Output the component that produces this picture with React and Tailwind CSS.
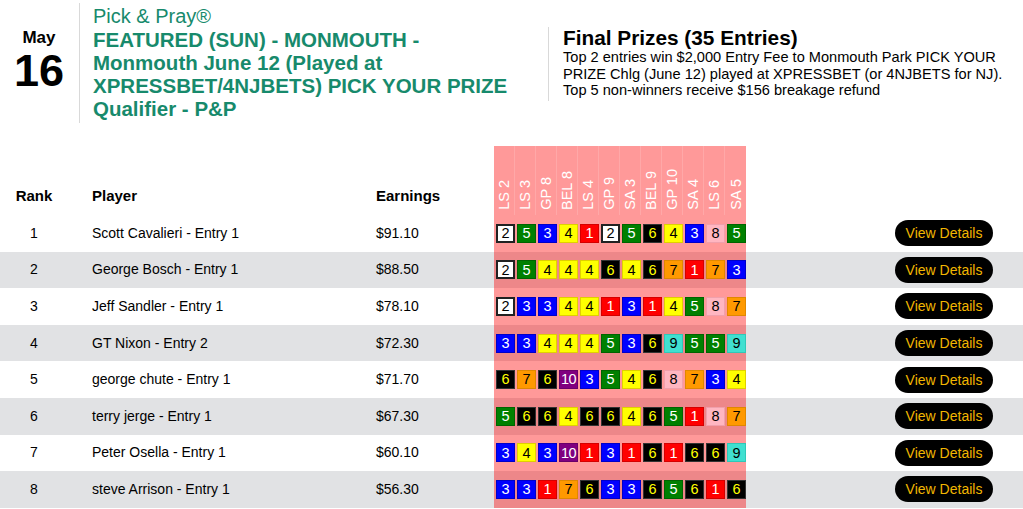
import React from "react";

const COLS = ["LS 2", "LS 3", "GP 8", "BEL 8", "LS 4", "GP 9", "SA 3", "BEL 9", "GP 10", "SA 4", "LS 6", "SA 5"];

const ROWS = [
  { rank: 1, name: "Scott Cavalieri - Entry 1", earn: "$91.10", picks: [2, 5, 3, 4, 1, 2, 5, 6, 4, 3, 8, 5] },
  { rank: 2, name: "George Bosch - Entry 1", earn: "$88.50", picks: [2, 5, 4, 4, 4, 6, 4, 6, 7, 1, 7, 3] },
  { rank: 3, name: "Jeff Sandler - Entry 1", earn: "$78.10", picks: [2, 3, 3, 4, 4, 1, 3, 1, 4, 5, 8, 7] },
  { rank: 4, name: "GT Nixon - Entry 2", earn: "$72.30", picks: [3, 3, 4, 4, 4, 5, 3, 6, 9, 5, 5, 9] },
  { rank: 5, name: "george chute - Entry 1", earn: "$71.70", picks: [6, 7, 6, 10, 3, 5, 4, 6, 8, 7, 3, 4] },
  { rank: 6, name: "terry jerge - Entry 1", earn: "$67.30", picks: [5, 6, 6, 4, 6, 6, 4, 6, 5, 1, 8, 7] },
  { rank: 7, name: "Peter Osella - Entry 1", earn: "$60.10", picks: [3, 4, 3, 10, 1, 3, 1, 6, 1, 6, 6, 9] },
  { rank: 8, name: "steve Arrison - Entry 1", earn: "$56.30", picks: [3, 3, 1, 7, 6, 3, 3, 6, 5, 6, 1, 6] },
];

const CLOTH = {
  1: "bg-[#ff0000] text-white border-[#d40000]",
  2: "bg-white text-black border-[#222] border-2",
  3: "bg-[#0000ff] text-white border-[#0000c8]",
  4: "bg-[#ffff00] text-black border-[#e0d000]",
  5: "bg-[#008000] text-white border-[#006400]",
  6: "bg-black text-[#ffff00] border-[#333]",
  7: "bg-[#ff9900] text-black border-[#e08800]",
  8: "bg-[#ffb6c1] text-black border-[#f0a0ac]",
  9: "bg-[#40e0d0] text-black border-[#30c8b8]",
  10: "bg-[#800080] text-white border-[#6a006a]",
};

function Cloth({ n }) {
  return (
    <div
      className={`w-[19px] h-[19px] flex items-center justify-center border text-[14.5px] leading-none ${CLOTH[n]} ${n === 10 ? "tracking-[-0.5px]" : ""}`}
    >
      {n}
    </div>
  );
}

export default function App() {
  return (
    <div className="w-[1023px] h-[509px] overflow-hidden bg-white text-black font-['Liberation_Sans',Arial,sans-serif]">
      {/* Header */}
      <div className="flex items-center h-[124px]">
        <div className="flex items-stretch pt-[1px] h-[121px]">
          <div className="w-[80px] border-r border-[#d9d9d9] flex flex-col items-center pt-[25px] pr-[1px]">
            <div className="text-[17px] font-bold leading-[20px]">May</div>
            <div className="text-[45px] font-bold leading-[46px]">16</div>
          </div>
          <div className="w-[436px] pl-[13px] text-[#178a6c] text-[20px] leading-[23px] pt-[2px]">
            <div>Pick &amp; Pray®</div>
            <div className="font-bold text-[20.5px]">
              FEATURED (SUN) - MONMOUTH - Monmouth June 12 (Played at XPRESSBET/4NJBETS) PICK YOUR PRIZE Qualifier - P&amp;P
            </div>
          </div>
        </div>
        <div className="ml-[32px] border-l border-[#d9d9d9] pl-[14px] w-[472px] self-start mt-[27px] pb-[2px]">
          <div className="text-[20.8px] font-bold leading-[22px]">Final Prizes (35 Entries)</div>
          <div className="text-[14.6px] leading-[16.5px]">
            Top 2 entries win $2,000 Entry Fee to Monmouth Park PICK YOUR PRIZE Chlg (June 12) played at XPRESSBET (or 4NJBETS for NJ). Top 5 non-winners receive $156 breakage refund
          </div>
        </div>
      </div>

      {/* Table */}
      <div className="mt-[22px]">
        <div className="flex h-[69px] text-[15px] font-bold">
          <div className="w-[68px] flex items-end justify-center pb-[8px]">Rank</div>
          <div className="w-[300px] flex items-end pl-[24px] pb-[8px]">Player</div>
          <div className="w-[126px] flex items-end pl-[8px] pb-[8px]">Earnings</div>
          <div className="w-[252px] flex bg-[rgba(255,0,0,0.4)]">
            {COLS.map((c) => (
              <div key={c} className="w-[21px] flex items-end justify-center pb-[5px] border-r border-white/15 last:border-r-0">
                <span className="[writing-mode:vertical-rl] rotate-180 text-white font-normal text-[14.5px] leading-[16px] whitespace-nowrap">
                  {c}
                </span>
              </div>
            ))}
          </div>
          <div className="flex-1" />
        </div>

        {ROWS.map((r, i) => (
          <div key={r.rank} className={`flex h-[36.6px] text-[14px] ${i % 2 === 1 ? "bg-[#e1e2e4]" : "bg-white"}`}>
            <div className="w-[68px] flex items-center justify-center">{r.rank}</div>
            <div className="w-[300px] flex items-center pl-[24px]">{r.name}</div>
            <div className="w-[126px] flex items-center pl-[8px]">{r.earn}</div>
            <div className="w-[252px] flex items-center gap-[2px] pl-[2px] bg-[rgba(255,0,0,0.4)]">
              {r.picks.map((p, j) => (
                <Cloth key={j} n={p} />
              ))}
            </div>
            <div className="flex-1 flex items-center justify-end pr-[30px]">
              <button className="w-[98px] h-[26px] rounded-full bg-black text-[#f2b600] text-[14px] leading-none">
                View Details
              </button>
            </div>
          </div>
        ))}
      </div>
    </div>
  );
}
